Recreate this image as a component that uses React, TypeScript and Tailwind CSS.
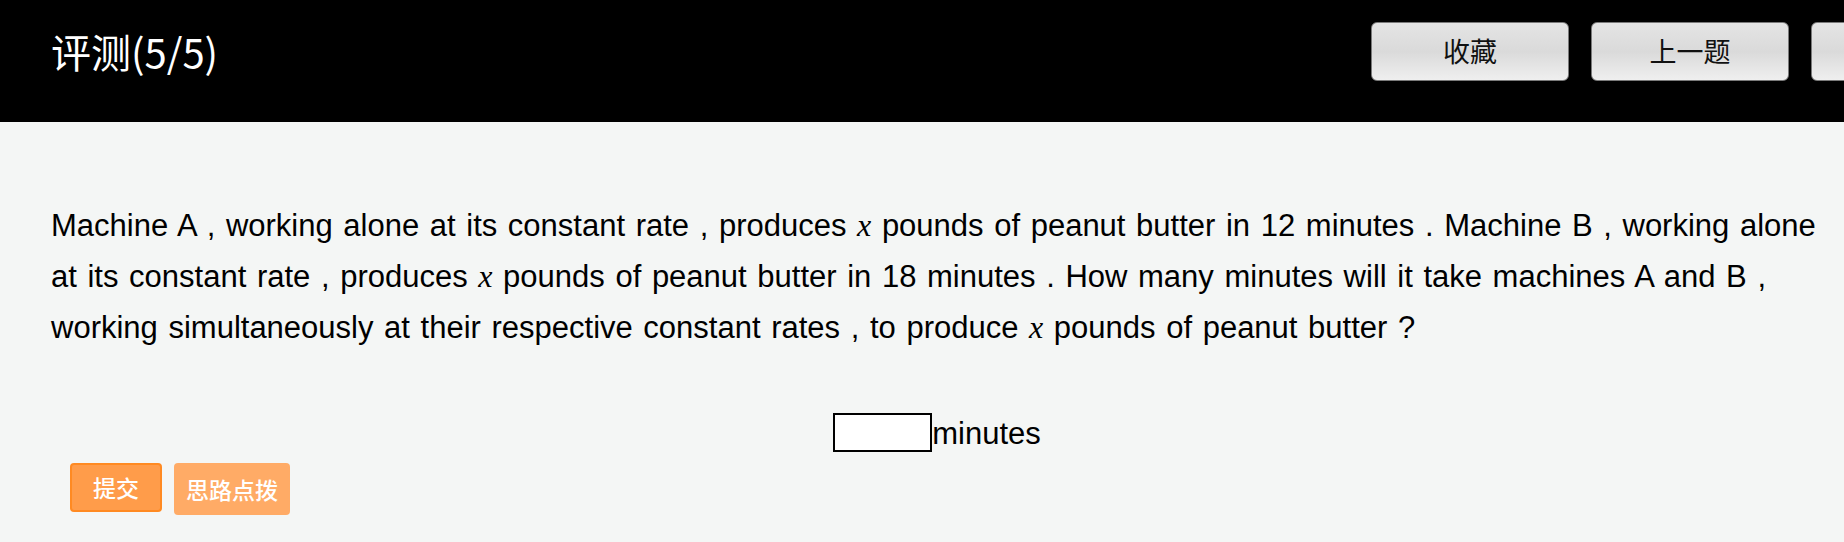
const headerButtons = ["收藏", "上一题", "下一题"];

function MathX() {
  return <span className="font-['Liberation_Serif',serif] text-[32px] italic">x</span>;
}

export default function App() {
  return (
    <div className="min-h-screen overflow-hidden bg-[#f4f6f5] font-['Liberation_Sans','Noto_Sans_CJK_SC',sans-serif] text-black">
      <header className="flex h-[122px] items-start overflow-hidden bg-black">
        <h1 className="flex-1 pl-[51px] pt-[23px] font-['Noto_Sans_CJK_SC',sans-serif] text-[40px] leading-[56px] text-white">
          评测(5/5)
        </h1>
        <div className="mr-[-165px] mt-[22px] flex shrink-0 gap-[22px]">
          {headerButtons.map((label) => (
            <button
              key={label}
              className="h-[59px] w-[198px] rounded-[6px] border border-[#7a7a7a] bg-gradient-to-b from-[#e4e4e4] via-[#dadada] to-[#efefef] font-['Noto_Sans_CJK_SC',sans-serif] text-[27px] text-[#111]"
            >
              {label}
            </button>
          ))}
        </div>
      </header>

      <main>
        <p className="mt-[78px] pl-[51px] pr-[12px] text-[31px] leading-[50px] [word-spacing:2px]">
          Machine A , working alone at its constant rate , produces <MathX /> pounds of peanut butter in 12 minutes .
          Machine B , working alone at its constant rate , produces <MathX /> pounds of peanut butter in 18 minutes .
          How many minutes will it take machines A and B , working simultaneously at their respective constant rates ,
          to produce <MathX /> pounds of peanut butter ?
        </p>

        <div className="mt-[60px] flex items-end justify-center pl-[30px]">
          <input className="h-[39px] w-[99px] border-2 border-black bg-white outline-none" />
          <span className="text-[31px] leading-[36px]">minutes</span>
        </div>

        <div className="mt-[11px] flex items-start gap-[12px] pl-[70px] font-['Noto_Sans_CJK_SC',sans-serif] text-[23px] font-medium text-white">
          <button className="h-[49px] w-[92px] rounded-[4px] border-2 border-[#ff8a22] bg-[#ff9c4a]">提交</button>
          <button className="h-[52px] w-[116px] rounded-[4px] bg-[#ffab66]">思路点拨</button>
        </div>
      </main>
    </div>
  );
}
